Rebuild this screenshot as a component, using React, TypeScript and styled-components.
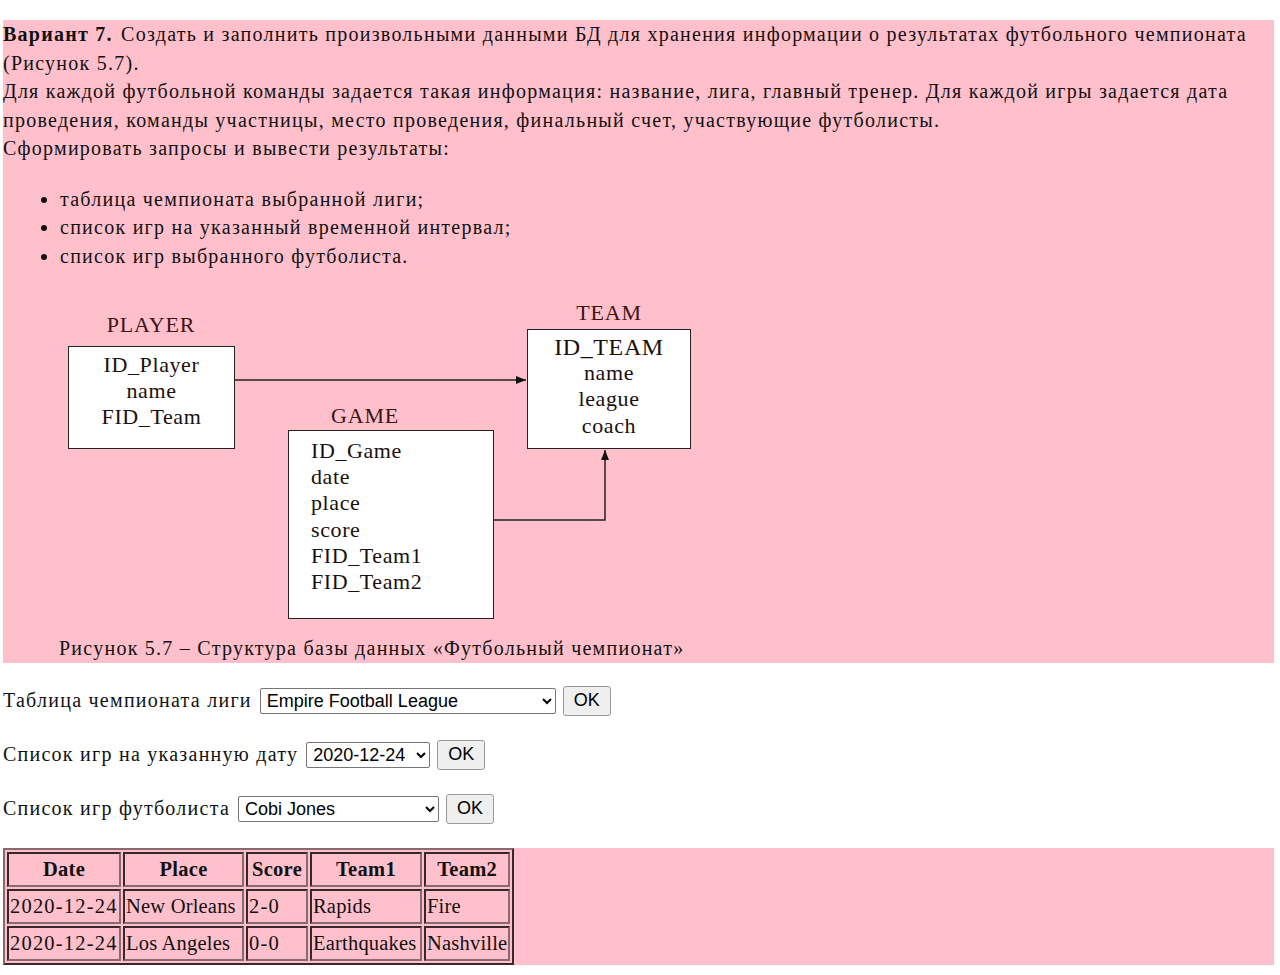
import React from "react";
import styled, { createGlobalStyle } from "styled-components";

const GlobalStyle = createGlobalStyle`
  html, body { margin: 0; padding: 0; background: #ffffff; }
  body {
    font-family: "Liberation Serif", "Times New Roman", serif;
    font-size: 20px;
    letter-spacing: 1.25px;
    color: #111;
  }
`;

const Page = styled.div`
  padding: 20px 6px 0 3px;
`;

const TaskBlock = styled.section`
  background: #ffc0cb;
  line-height: 28.5px;
`;

const Para = styled.p`
  margin: 0;
`;

const Lead = styled.b`
  margin-right: 2px;
`;

const List = styled.ul`
  margin: 22px 0 0 0;
  padding-left: 57px;
  list-style: disc;
`;

const Diagram = styled.div`
  position: relative;
  height: 364px;
  letter-spacing: 0.6px;
`;

const Arrows = styled.svg`
  position: absolute;
  left: 0;
  top: 0;
`;

const EntityTitle = styled.div<{ $x: number; $y: number; $w: number }>`
  position: absolute;
  left: ${(p) => p.$x}px;
  top: ${(p) => p.$y}px;
  width: ${(p) => p.$w}px;
  text-align: center;
  font-size: 22px;
  line-height: 26px;
  letter-spacing: 0.8px;
  color: #3c1414;
`;

const EntityBox = styled.div<{ $x: number; $y: number; $w: number; $h: number; $align: string; $pad: number }>`
  position: absolute;
  left: ${(p) => p.$x}px;
  top: ${(p) => p.$y}px;
  width: ${(p) => p.$w}px;
  height: ${(p) => p.$h}px;
  box-sizing: border-box;
  border: 1.5px solid #222;
  background: #ffffff;
  text-align: ${(p) => p.$align};
  padding: ${(p) => p.$pad}px 0 0 ${(p) => (p.$align === "left" ? 22 : 0)}px;
  font-size: 22px;
  line-height: 26.2px;
  color: #1a1010;
`;

const Field = styled.div<{ $big?: boolean }>`
  font-size: ${(p) => (p.$big ? 24 : 22)}px;
`;

const Caption = styled.div`
  padding-left: 56px;
`;

const FormRow = styled.form`
  display: flex;
  align-items: center;
  height: 30px;
  margin: 0 0 24px 0;
  &:first-of-type { margin-top: 23px; }
`;

const Label = styled.span`
  margin-right: 8px;
`;

const Select = styled.select<{ $w: number }>`
  width: ${(p) => p.$w}px;
  height: 26px;
  font-family: "Liberation Sans", Arial, sans-serif;
  font-size: 18px;
  letter-spacing: 0;
  border: 1px solid #767676;
  border-radius: 2px;
  background: #fff;
  color: #000;
  padding: 0 2px;
`;

const OkButton = styled.button`
  margin-left: 7px;
  height: 30px;
  padding: 0 10px;
  font-family: "Liberation Sans", Arial, sans-serif;
  font-size: 18px;
  letter-spacing: 0;
  border: 1px solid #999;
  border-radius: 3px;
  background: #efefef;
  color: #000;
`;

const ResultBlock = styled.section`
  background: #ffc0cb;
  margin-top: 13px;
  padding: 0;
`;

const Table = styled.table`
  border: 2px outset #8a6a6e;
  border-spacing: 2px;
  font-size: 20.5px;
  letter-spacing: 0.3px;
  line-height: 27px;
`;

const Th = styled.th<{ $w: number }>`
  width: ${(p) => p.$w}px;
  border: 2px inset #8a6a6e;
  padding: 2px 1px;
  font-weight: bold;
  text-align: center;
  white-space: nowrap;
`;

const Td = styled.td<{ $wide?: boolean }>`
  border: 2px inset #8a6a6e;
  padding: 2px 1px;
  white-space: nowrap;
  letter-spacing: ${(p) => (p.$wide ? 1.2 : 0.2)}px;
`;

const columns = [
  { title: "Date", w: 108 },
  { title: "Place", w: 115 },
  { title: "Score", w: 56 },
  { title: "Team1", w: 106 },
  { title: "Team2", w: 79 },
];

const games = [
  { date: "2020-12-24", place: "New Orleans", score: "2-0", t1: "Rapids", t2: "Fire" },
  { date: "2020-12-24", place: "Los Angeles", score: "0-0", t1: "Earthquakes", t2: "Nashville" },
];

export default function App() {
  return (
    <Page>
      <GlobalStyle />
      <TaskBlock>
        <Para>
          <Lead>Вариант 7.</Lead> Создать и заполнить произвольными данными БД для хранения информации о результатах футбольного чемпионата (Рисунок 5.7).
        </Para>
        <Para>
          Для каждой футбольной команды задается такая информация: название, лига, главный тренер. Для каждой игры задается дата проведения, команды участницы, место проведения, финальный счет, участвующие футболисты.
        </Para>
        <Para>Сформировать запросы и вывести результаты:</Para>
        <List>
          <li>таблица чемпионата выбранной лиги;</li>
          <li>список игр на указанный временной интервал;</li>
          <li>список игр выбранного футболиста.</li>
        </List>
        <Diagram>
          <Arrows width="1271" height="364" viewBox="0 0 1271 364">
            <defs>
              <marker id="ah" markerWidth="10" markerHeight="8" refX="10" refY="4" orient="auto" markerUnits="userSpaceOnUse">
                <path d="M0,0 L10,4 L0,8 Z" fill="#111" />
              </marker>
            </defs>
            <line x1="232" y1="110" x2="523" y2="110" stroke="#222" strokeWidth="1.5" markerEnd="url(#ah)" />
            <polyline points="490,250 602,250 602,180" fill="none" stroke="#222" strokeWidth="1.5" markerEnd="url(#ah)" />
          </Arrows>
          <EntityTitle $x={65} $y={42} $w={166}>PLAYER</EntityTitle>
          <EntityBox $x={65} $y={76} $w={167} $h={103} $align="center" $pad={5}>
            <Field>ID_Player</Field>
            <Field>name</Field>
            <Field>FID_Team</Field>
          </EntityBox>
          <EntityTitle $x={524} $y={30} $w={164}>TEAM</EntityTitle>
          <EntityBox $x={524} $y={59} $w={164} $h={120} $align="center" $pad={4}>
            <Field $big>ID_TEAM</Field>
            <Field>name</Field>
            <Field>league</Field>
            <Field>coach</Field>
          </EntityBox>
          <EntityTitle $x={262} $y={133} $w={200}>GAME</EntityTitle>
          <EntityBox $x={285} $y={160} $w={206} $h={189} $align="left" $pad={7}>
            <Field>ID_Game</Field>
            <Field>date</Field>
            <Field>place</Field>
            <Field>score</Field>
            <Field>FID_Team1</Field>
            <Field>FID_Team2</Field>
          </EntityBox>
        </Diagram>
        <Caption>Рисунок 5.7 – Структура базы данных «Футбольный чемпионат»</Caption>
      </TaskBlock>

      <FormRow onSubmit={(e) => e.preventDefault()}>
        <Label>Таблица чемпионата лиги</Label>
        <Select $w={296} defaultValue="efl">
          <option value="efl">Empire Football League</option>
        </Select>
        <OkButton type="submit">OK</OkButton>
      </FormRow>
      <FormRow onSubmit={(e) => e.preventDefault()}>
        <Label>Список игр на указанную дату</Label>
        <Select $w={124} defaultValue="d">
          <option value="d">2020-12-24</option>
        </Select>
        <OkButton type="submit">OK</OkButton>
      </FormRow>
      <FormRow onSubmit={(e) => e.preventDefault()}>
        <Label>Список игр футболиста</Label>
        <Select $w={201} defaultValue="cj">
          <option value="cj">Cobi Jones</option>
        </Select>
        <OkButton type="submit">OK</OkButton>
      </FormRow>

      <ResultBlock>
        <Table>
          <thead>
            <tr>
              {columns.map((c) => (
                <Th key={c.title} $w={c.w}>{c.title}</Th>
              ))}
            </tr>
          </thead>
          <tbody>
            {games.map((g, i) => (
              <tr key={i}>
                <Td $wide>{g.date}</Td>
                <Td>{g.place}</Td>
                <Td $wide>{g.score}</Td>
                <Td>{g.t1}</Td>
                <Td>{g.t2}</Td>
              </tr>
            ))}
          </tbody>
        </Table>
      </ResultBlock>
    </Page>
  );
}
